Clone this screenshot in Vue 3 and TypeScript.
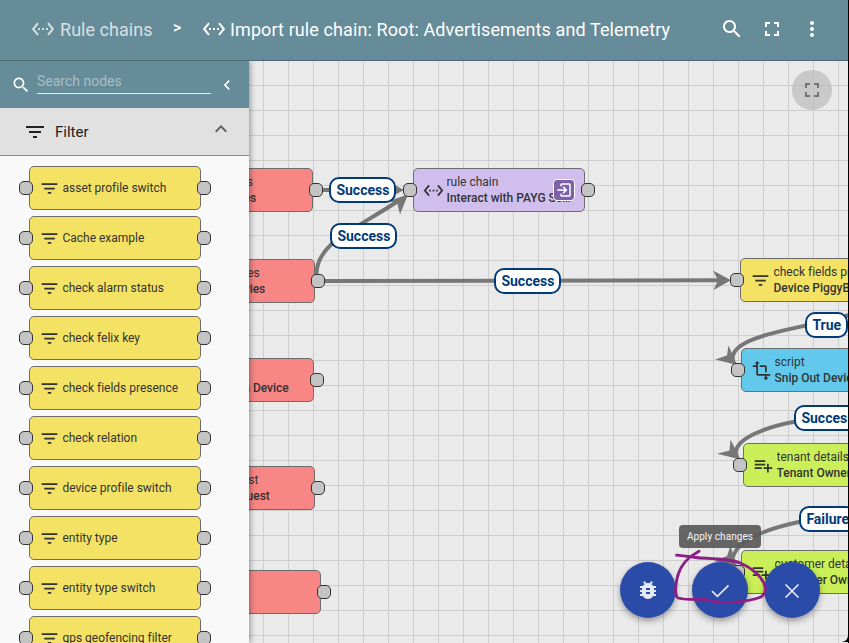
<script setup lang="ts">
type IconName = 'ethernet' | 'search' | 'fullscreen' | 'more' | 'filter' | 'left' | 'up' | 'transform' | 'playlist' | 'bug' | 'exit'

const icons: Record<IconName, string> = {
  ethernet: 'M7.77 6.76L6.23 5.48.82 12l5.41 6.52 1.54-1.28L3.42 12l4.35-5.24zM7 13h2v-2H7v2zm10-2h-2v2h2v-2zm-6 2h2v-2h-2v2zm6.77-7.52l-1.54 1.28L20.58 12l-4.35 5.24 1.54 1.28L23.18 12l-5.41-6.52z',
  search: 'M15.5 14h-.79l-.28-.27C15.41 12.59 16 11.11 16 9.5 16 5.91 13.09 3 9.5 3S3 5.91 3 9.5 5.91 16 9.5 16c1.61 0 3.09-.59 4.23-1.57l.27.28v.79l5 4.99L20.49 19l-4.99-5zm-6 0C7.01 14 5 11.99 5 9.5S7.01 5 9.5 5 14 7.01 14 9.5 11.99 14 9.5 14z',
  fullscreen: 'M7 14H5v5h5v-2H7v-3zm-2-4h2V7h3V5H5v5zm12 7h-3v2h5v-5h-2v3zM14 5v2h3v3h2V5h-5z',
  more: 'M12 8c1.1 0 2-.9 2-2s-.9-2-2-2-2 .9-2 2 .9 2 2 2zm0 2c-1.1 0-2 .9-2 2s.9 2 2 2 2-.9 2-2-.9-2-2-2zm0 6c-1.1 0-2 .9-2 2s.9 2 2 2 2-.9 2-2-.9-2-2-2z',
  filter: 'M10 18h4v-2h-4v2zM3 6v2h18V6H3zm3 7h12v-2H6v2z',
  left: 'M15.41 7.41L14 6l-6 6 6 6 1.41-1.41L10.83 12z',
  up: 'M12 8l-6 6 1.41 1.41L12 10.83l4.59 4.58L18 14z',
  transform: 'M22 18v-2H8V4h2L7 1 4 4h2v2H2v2h4v8c0 1.1.9 2 2 2h8v2h-2l3 3 3-3h-2v-2h4zM10 8h6v6h2V8c0-1.1-.9-2-2-2h-6v2z',
  playlist: 'M14 10H2v2h12v-2zm0-4H2v2h12V6zm4 8v-4h-2v4h-4v2h4v4h2v-4h4v-2h-4zM2 16h8v-2H2v2z',
  bug: 'M20 8h-2.81c-.45-.78-1.07-1.45-1.82-1.96L17 4.41 15.59 3l-2.17 2.17C12.96 5.06 12.49 5 12 5c-.49 0-.96.06-1.41.17L8.41 3 7 4.41l1.62 1.63C7.88 6.55 7.26 7.22 6.81 8H4v2h2.09c-.05.33-.09.66-.09 1v1H4v2h2v1c0 .34.04.67.09 1H4v2h2.81c1.04 1.79 2.97 3 5.19 3s4.15-1.21 5.19-3H20v-2h-2.09c.05-.33.09-.66.09-1v-1h2v-2h-2v-1c0-.34-.04-.67-.09-1H20V8zm-6 8h-4v-2h4v2zm0-4h-4v-2h4v2z',
  exit: 'M10.09 15.59L11.5 17l5-5-5-5-1.41 1.41L12.67 11H3v2h9.67l-2.58 2.59zM19 3H9a2 2 0 0 0-2 2v2h2V5h10v14H9v-2H7v2a2 2 0 0 0 2 2h10c1.1 0 2-.9 2-2V5a2 2 0 0 0-2-2z',
}

const palette: string[] = [
  'asset profile switch', 'Cache example', 'check alarm status', 'check felix key', 'check fields presence',
  'check relation', 'device profile switch', 'entity type', 'entity type switch', 'gps geofencing filter',
]

// Canvas origin inside the page; diagram data is kept in page coordinates.
const ORIGIN = { x: 249, y: 61 }
const place = (x: number, y: number) => ({ left: `${x - ORIGIN.x}px`, top: `${y - ORIGIN.y}px` })

interface ChainNode { x: number; y: number; kind: string; icon: IconName; type: string; name: string; link?: boolean; out?: boolean }
const nodes: ChainNode[] = [
  { x: 413, y: 168, kind: 'flow', icon: 'ethernet', type: 'rule chain', name: 'Interact with PAYG Server', link: true, out: true },
  { x: 740, y: 258, kind: 'filter', icon: 'filter', type: 'check fields presence', name: 'Device PiggyBack' },
  { x: 741, y: 348, kind: 'script', icon: 'transform', type: 'script', name: 'Snip Out Device' },
  { x: 743, y: 443, kind: 'enrich', icon: 'playlist', type: 'tenant details', name: 'Tenant Owner' },
  { x: 741, y: 550, kind: 'enrich', icon: 'playlist', type: 'customer details', name: 'Customer Owner' },
]

// Nodes partly scrolled beneath the palette: typeEnd / nameEnd are the right ends of the text lines.
interface ClippedNode { x: number; y: number; type: string; typeEnd: number; name: string; nameEnd: number }
const clipped: ClippedNode[] = [
  { x: 141, y: 168, type: 's', typeEnd: 253, name: 'es', nameEnd: 256.3 },
  { x: 143, y: 259, type: 'es', typeEnd: 259.8, name: 'ries', nameEnd: 265.3 },
  { x: 142, y: 358, type: '', typeEnd: 249, name: 'n Device', nameEnd: 288.8 },
  { x: 143, y: 466, type: 'est', typeEnd: 258.4, name: 'quest', nameEnd: 269.8 },
  { x: 149, y: 570, type: '', typeEnd: 249, name: '', nameEnd: 249 },
]

const labels = [
  { x: 329.4, y: 177, text: 'Success' },
  { x: 330.4, y: 223, text: 'Success' },
  { x: 494.4, y: 268, text: 'Success' },
  { x: 805.4, y: 312, text: 'True' },
  { x: 794.4, y: 405, text: 'Success' },
  { x: 799.4, y: 506, text: 'Failure' },
]

const edges: string[] = [
  'M323 190H400',
  'M316.5 274C317 242 355 230 398 201',
  'M325 281L720 280.2',
  'M860 313L845 316M806 325.5C775 332 729 341 733 360',
  'M796 421.5C770 426 733 438 736 455',
  'M801 521.5C770 528 733 540 732 562',
]
const heads: string[] = [
  '404,190 386,180.5 391,190 386,199.5',
  '408,194.5 387,201.5 397,202 400,214.5',
  '731,280.3 713,270.5 718,280.3 713.5,290',
  '737,365 728.5,345.5 727,355.5 715,359.5',
  '740.5,459.5 730.5,439.5 729.5,450.5 717,453.8',
  '737,567 730.5,545.5 727,556 714,561',
]
</script>

<template>
  <div class="app">
    <header class="topbar">
      <svg class="i24" viewBox="0 0 24 24"><path :d="icons.ethernet" opacity=".75" /></svg>
      <span class="crumb dim">Rule chains</span>
      <span class="sep">&gt;</span>
      <svg class="i24" viewBox="0 0 24 24"><path :d="icons.ethernet" /></svg>
      <span class="crumb title">Import rule chain: Root: Advertisements and Telemetry</span>
      <div class="actions">
        <svg class="i24" viewBox="0 0 24 24"><path :d="icons.search" /></svg>
        <svg class="i24" viewBox="0 0 24 24"><path :d="icons.fullscreen" /></svg>
        <svg class="i24" viewBox="0 0 24 24"><path :d="icons.more" /></svg>
      </div>
    </header>

    <main class="body">
      <aside class="side">
        <div class="searchbar">
          <svg class="i20" viewBox="0 0 24 24"><path :d="icons.search" /></svg>
          <div class="field">Search nodes</div>
          <svg class="i20" viewBox="0 0 24 24"><path :d="icons.left" /></svg>
        </div>
        <div class="group">
          <svg class="i24" viewBox="0 0 24 24"><path :d="icons.filter" /></svg>
          <span>Filter</span>
          <svg class="i24 fold" viewBox="0 0 24 24"><path :d="icons.up" /></svg>
        </div>
        <div class="list">
          <div v-for="p in palette" :key="p" class="node filter">
            <i class="port in"></i>
            <svg class="i21" viewBox="0 0 24 24"><path :d="icons.filter" /></svg>
            <span class="ptext">{{ p }}</span>
            <i class="port out"></i>
          </div>
        </div>
      </aside>

      <section class="canvas">
        <svg class="edges" viewBox="249 61 599 582">
          <path v-for="e in edges" :key="e" :d="e" fill="none" stroke="#777" stroke-width="4" />
          <polygon v-for="h in heads" :key="h" :points="h" fill="#777" />
        </svg>

        <div v-for="n in clipped" :key="n.y" class="node action placed" :style="place(n.x, n.y)">
          <div class="lines tail">
            <span class="type" :style="{ width: `${n.typeEnd - n.x - 1}px` }">{{ n.type }}</span>
            <span class="name" :style="{ width: `${n.nameEnd - n.x - 1}px` }">{{ n.name }}</span>
          </div>
          <i class="port out"></i>
        </div>

        <div v-for="n in nodes" :key="n.name" class="node placed" :class="n.kind" :style="place(n.x, n.y)">
          <i class="port in"></i>
          <svg class="i21" viewBox="0 0 24 24"><path :d="icons[n.icon]" /></svg>
          <div class="lines">
            <span class="type">{{ n.type }}</span>
            <span class="name">{{ n.name }}</span>
          </div>
          <span v-if="n.link" class="link"><svg viewBox="0 0 24 24"><path :d="icons.exit" /></svg></span>
          <i v-if="n.out" class="port out"></i>
        </div>

        <div v-for="l in labels" :key="l.y" class="label" :style="place(l.x, l.y)">{{ l.text }}</div>

        <div class="expand"><svg class="i24" viewBox="0 0 24 24"><path :d="icons.fullscreen" /></svg></div>

        <div class="fabs">
          <div class="fab"><svg class="i24" viewBox="0 0 24 24"><path :d="icons.bug" /></svg></div>
          <div class="fab"><svg class="i24 line" viewBox="0 0 24 24"><path d="M4 13.2l5.4 5.2L20.5 7.3" /></svg></div>
          <div class="fab"><svg class="i24 line" viewBox="0 0 24 24"><path d="M5.5 6.5l13 13M18.5 6.5l-13 13" /></svg></div>
        </div>
        <div class="tip">Apply changes</div>
        <svg class="edges scribble" viewBox="249 61 599 582">
          <path d="M676.5 555.2C684 556 692 557 699 558C713 558.5 728 559 738 562C750 567 759 573 764 583C767 590 765 596 758 598C749 601 732 603 721 602.5C713 602 706 598 699 599C691 599.5 683 599.5 678 598C674 595 676 587 676.5 581C678 571 684 562 690 557L699 551.3" />
          <path class="grain" d="M677 554.5C690 558 713 557 738 563C750 567 758 573 763 583C767 590 764 596 757 599C749 600 732 604 721 602C713 603 706 598 699 600C691 599 683 600 677 597C675 590 675 587 677 581C679 571 683 562 691 557" />
        </svg>
        <svg class="corner" viewBox="0 0 8 8"><path d="M8 0V8H0Q7 7 8 0Z" /></svg>
      </section>
    </main>
  </div>
</template>

<style>
body { margin: 0; background: #000; }
</style>

<style scoped>
.app { width: 848px; height: 643px; display: flex; flex-direction: column; overflow: hidden; font-family: Roboto, sans-serif; background: #eaeaea; border-right: 1px solid #000; }
svg { display: block; fill: currentColor; flex: none; }
.i20 { width: 20px; height: 20px; }
.i21 { width: 21px; height: 21px; }
.i24 { width: 24px; height: 24px; }
.topbar { position: relative; z-index: 5; box-sizing: border-box; flex: none; height: 61px; padding: 0 24px 3px 31px; display: flex; align-items: center; background: #668b99; border-bottom: 1px solid #4c6872; color: #fff; }
.crumb { font-size: 18px; line-height: 24px; white-space: nowrap; padding-top: 3px; letter-spacing: .1px; }
.dim { color: rgba(255, 255, 255, .75); margin-left: 5px; width: 93px; letter-spacing: .04px; }
.sep { width: 10px; margin: 0 19px 3px 20px; font-size: 16px; font-weight: 500; }
.title { margin-left: 4px; }
.actions { margin-left: auto; display: flex; gap: 16px; }
.body { flex: 1; min-height: 0; display: flex; }
.side { position: relative; z-index: 4; width: 249px; flex: none; display: flex; flex-direction: column; overflow: hidden; background: #f9f9f9; box-shadow: 1px 0 6px rgba(0, 0, 0, .4); }
.searchbar { box-sizing: border-box; height: 47px; flex: none; display: flex; align-items: center; padding: 1px 12px 0 11px; background: #668b99; color: #fff; }
.field { box-sizing: border-box; width: 174px; height: 26px; margin: 0 6px 9px 6px; border-bottom: 1px solid #e2eaec; color: #a9bfc8; font-size: 14px; line-height: 26px; }
.group { box-sizing: border-box; height: 48px; flex: none; display: flex; align-items: center; padding: 0 16px 0 23px; background: #e1e1e1; border-bottom: 1px solid #888; color: #212121; font-size: 15px; }
.group span { margin-left: 8px; }
.fold { margin: 0 0 5px auto; color: #616161; }
.list { display: flex; flex-direction: column; gap: 6px; padding: 10px 0 0 29px; }
.node { position: relative; box-sizing: border-box; width: 172px; height: 44px; flex: none; display: flex; align-items: center; gap: 3px; padding-left: 8.5px; border: 1px solid #6d6d6d; border-radius: 5px; color: #333; font-size: 12px; }
.placed { position: absolute; }
.filter { background: #f4e265; }
.action { background: #f78684; padding-left: 0; }
.flow { background: #d0bfec; }
.script { background: #63c9ec; }
.enrich { background: #caef58; }
.ptext { letter-spacing: -.01px; white-space: nowrap; }
.port { position: absolute; top: 14px; box-sizing: border-box; width: 14px; height: 14px; border: 1px solid #333; border-radius: 5px; background: #c4c4c4; }
.port.in { left: -11px; }
.port.out { right: -11px; }
.lines { width: 126px; display: flex; flex-direction: column; line-height: 16px; letter-spacing: -.01px; }
.lines span { overflow: hidden; text-overflow: ellipsis; white-space: nowrap; height: 16px; }
.tail { width: 160px; }
.tail span { text-align: right; }
.name { font-weight: 500; }
.link { position: absolute; left: 139px; top: 10px; width: 20px; height: 20px; border: 1px solid #fff; border-radius: 4px; background: #7e60a8; color: #fff; display: flex; align-items: center; justify-content: center; }
.link svg { width: 18px; height: 18px; }
.canvas { position: relative; flex: 1; overflow: hidden; background-color: #eaeaea; background-image: linear-gradient(to right, #cecece 1px, transparent 1px), linear-gradient(#cecece 1px, transparent 1px); background-size: 25px 25px; background-position: 14px 24px; }
.edges { position: absolute; left: 0; top: 0; width: 599px; height: 582px; }
.label { position: absolute; box-sizing: border-box; height: 26px; padding: 0 5px; border: 2px solid #003a79; border-radius: 10px; background: #fff; color: #003a79; font-size: 14px; font-weight: 700; line-height: 22px; white-space: nowrap; }
.expand { position: absolute; left: 543px; top: 9px; width: 40px; height: 40px; border-radius: 50%; background: rgba(190, 190, 190, .75); color: #757575; display: flex; align-items: center; justify-content: center; }
.fabs { position: absolute; left: 371px; top: 501px; display: flex; gap: 16px; }
.fab { width: 56px; height: 56px; border-radius: 50%; background: #2a4ba8; color: #e4e8f5; display: flex; align-items: center; justify-content: center; box-shadow: 0 3px 6px rgba(0, 0, 0, .35); }
.line { fill: none; stroke: currentColor; stroke-width: 1.7; }
.tip { position: absolute; left: 430px; top: 464px; width: 82px; height: 23px; border-radius: 4px; background: rgba(92, 92, 92, .94); color: #f4f4f4; font-size: 10px; line-height: 23px; text-align: center; letter-spacing: .08px; }
.scribble { fill: none; stroke: #8c1f86; stroke-width: 2.8; stroke-linecap: round; stroke-linejoin: round; }
.grain { stroke-width: 1.8; stroke-dasharray: 3 2; stroke-linecap: butt; }
.corner { position: absolute; right: 0; bottom: 0; width: 6px; height: 8px; color: #000; }
</style>
